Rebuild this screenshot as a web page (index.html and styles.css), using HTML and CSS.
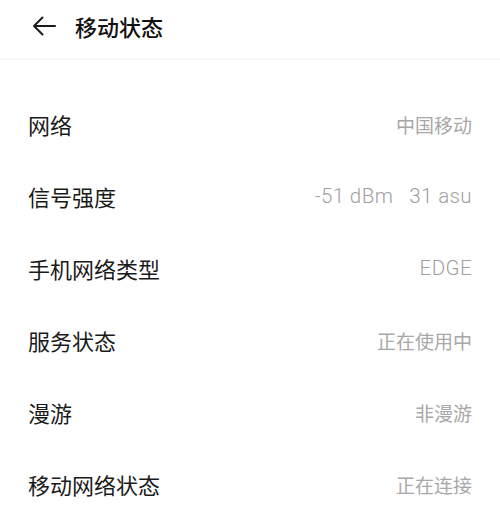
FILE: index.html
```html
<!DOCTYPE html>
<html lang="zh-CN">
<head>
    <meta charset="UTF-8">
    <meta name="viewport" content="width=device-width, initial-scale=1.0">
    <title>移动状态</title>
    <link rel="stylesheet" href="styles.css">
</head>
<body>
    <div class="header">
        <svg class="back-icon" width="24" height="20" viewBox="0 0 24 20">
            <path d="M23 10 H2 M10.5 1.5 L2 10 L10.5 18.5" fill="none" stroke="#1c1c1c" stroke-width="2" stroke-linecap="round" stroke-linejoin="round"/>
        </svg>
        <span class="title">移动状态</span>
    </div>

    <div class="list">
        <div class="row">
            <span class="label">网络</span>
            <span class="value">中国移动</span>
        </div>
        <div class="row">
            <span class="label">信号强度</span>
            <span class="value latin"><span>-51 dBm</span><span class="spaced">31 asu</span></span>
        </div>
        <div class="row">
            <span class="label">手机网络类型</span>
            <span class="value latin">EDGE</span>
        </div>
        <div class="row">
            <span class="label">服务状态</span>
            <span class="value">正在使用中</span>
        </div>
        <div class="row">
            <span class="label">漫游</span>
            <span class="value">非漫游</span>
        </div>
        <div class="row">
            <span class="label">移动网络状态</span>
            <span class="value">正在连接</span>
        </div>
    </div>
</body>
</html>
```

FILE: styles.css
```css
body {
    margin: 0;
    background-color: #fff;
    font-family: Roboto, "Noto Sans CJK SC", sans-serif;
    color: #1a1a1a;
    overflow: hidden;
}
.header {
    display: flex;
    align-items: center;
    box-sizing: border-box;
    height: 60px;
    padding-left: 32px;
    padding-bottom: 7px;
    border-bottom: 2px solid #f7f7f7;
}
.back-icon {
    margin-right: 19px;
    margin-top: 1px;
}
.title {
    font-size: 22px;
    font-weight: 500;
    color: #111;
}
.list {
    padding-top: 28px;
}
.row {
    display: flex;
    align-items: center;
    justify-content: space-between;
    height: 72px;
    padding: 0 28px 0 28px;
}
.label {
    font-size: 22px;
}
.value {
    font-size: 19px;
    color: #a8a8a8;
}
.latin {
    font-size: 20.5px;
    font-weight: 300;
    letter-spacing: 0.4px;
    color: #a0a0a0;
}
.spaced {
    margin-left: 16px;
}
```
